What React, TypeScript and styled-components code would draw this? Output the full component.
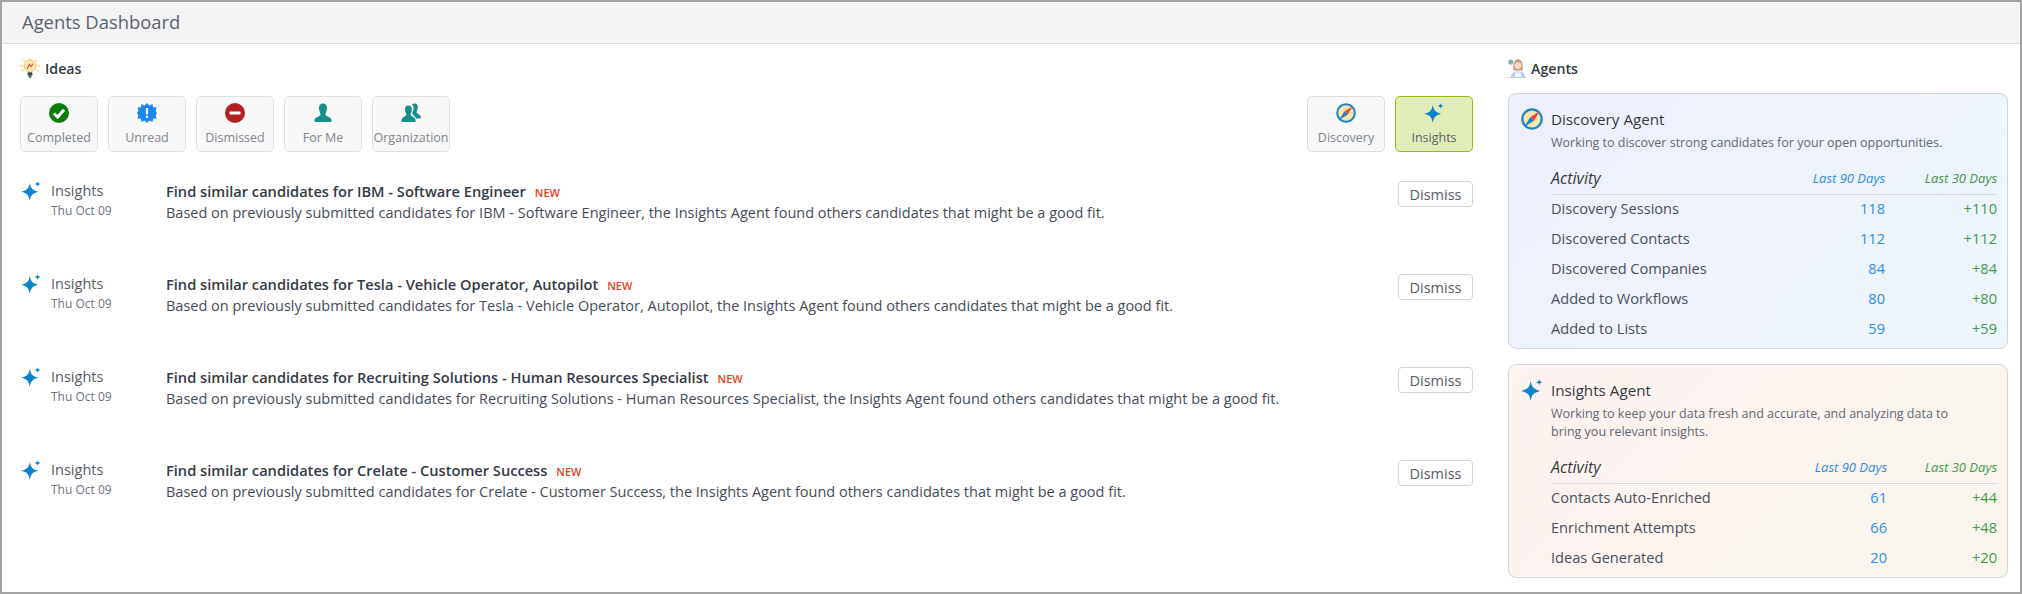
import styled, { createGlobalStyle } from "styled-components";

const GlobalStyle = createGlobalStyle`
  html, body { margin: 0; padding: 0; background: #fff; }
  body { font-family: "Open Sans", "Noto Sans", "Liberation Sans", sans-serif; color: #333a44; }
`;

const Sparkle = ({ size = 20 }: { size?: number }) => (
  <svg width={size} height={size} viewBox="0 0 20 20">
    <path d="M8.8 1.8 C9.8 7.4 11.2 9.2 17.6 10.8 C11.2 12.4 9.8 14.2 8.8 20 C7.8 14.2 6.4 12.4 0 10.8 C6.4 9.2 7.8 7.4 8.8 1.8Z" fill="#0a84cf" />
    <path d="M16.6 0 C16.9 1.9 17.4 2.5 19.6 3 C17.4 3.5 16.9 4.1 16.6 6 C16.3 4.1 15.8 3.5 13.6 3 C15.8 2.5 16.3 1.9 16.6 0Z" fill="#0a84cf" />
  </svg>
);

const Compass = ({ size = 20 }: { size?: number }) => (
  <svg width={size} height={size} viewBox="0 0 20 20">
    <circle cx="10" cy="10" r="8.8" fill="#fbe3a0" stroke="#1b86cc" strokeWidth="2" />
    <circle cx="10" cy="10" r="5.5" fill="none" stroke="#f7efd2" strokeWidth="1" />
    <path d="M17 3 L11.8 11.6 L8.4 8.4Z" fill="#e8483c" />
    <path d="M3 17 L8.4 8.4 L11.8 11.6Z" fill="#1b7fd0" />
  </svg>
);

const Check = () => (
  <svg width="20" height="20" viewBox="0 0 20 20">
    <circle cx="10" cy="10" r="10" fill="#0b7d0b" />
    <path d="M5 10.5 L8.6 14 L15 6.8" fill="none" stroke="#fff" strokeWidth="3" />
  </svg>
);

const Burst = () => (
  <svg width="20" height="20" viewBox="0 0 20 20">
    <path
      d="M10 0 L12.3 2.6 L15.4 1 L16.2 4.2 L19.6 4.4 L18.6 7.6 L20 10 L18.6 12.4 L19.6 15.6 L16.2 15.8 L15.4 19 L12.3 17.4 L10 20 L7.7 17.4 L4.6 19 L3.8 15.8 L0.4 15.6 L1.4 12.4 L0 10 L1.4 7.6 L0.4 4.4 L3.8 4.2 L4.6 1 L7.7 2.6Z"
      fill="#1a86f0"
    />
    <rect x="8.9" y="5" width="2.2" height="6.4" fill="#fff" />
    <rect x="8.9" y="12.6" width="2.2" height="2.2" fill="#fff" />
  </svg>
);

const Minus = () => (
  <svg width="20" height="20" viewBox="0 0 20 20">
    <circle cx="10" cy="10" r="10" fill="#b3201f" />
    <rect x="4.5" y="8.6" width="11" height="2.8" rx="0.6" fill="#fff" />
  </svg>
);

const Person = () => (
  <svg width="20" height="20" viewBox="0 0 20 20">
    <path d="M10 0.5 C13 0.5 14.2 3 14 5.6 C13.8 8.4 12.6 10 12.4 11.4 C12.3 13 17.4 13.8 18.4 16.4 C18.8 17.6 18.6 19 18 19 L2 19 C1.4 19 1.2 17.6 1.6 16.4 C2.6 13.8 7.7 13 7.6 11.4 C7.4 10 6.2 8.4 6 5.6 C5.8 3 7 0.5 10 0.5Z" fill="#16908f" />
  </svg>
);

const People = () => (
  <svg width="20" height="20" viewBox="0 0 20 20">
    <path d="M13.5 0.5 C16 0.5 17 2.4 16.8 4.6 C16.6 6.8 15.6 8 15.6 9.2 C15.6 10.6 19 11.4 19.7 13.2 C20 14.2 19.8 15.4 19.2 15.4 L15 15.4 C14 13 11.6 11.6 11.2 10.6 C11 9.4 12.6 8 12.6 5 C12.6 3.4 11.8 2.4 11 1.8 C11.6 1 12.5 0.5 13.5 0.5Z" fill="#16908f" />
    <path d="M7.4 2.5 C10 2.5 11 4.6 10.8 7 C10.6 9.2 9.6 10.4 9.6 11.8 C9.6 13.2 13.6 14.2 14.4 16.4 C14.8 17.6 14.6 19 14 19 L1 19 C0.4 19 0.2 17.6 0.6 16.4 C1.4 14.2 5.2 13.2 5.2 11.8 C5.2 10.4 4.2 9.2 4 7 C3.8 4.6 4.8 2.5 7.4 2.5Z" fill="#16908f" />
  </svg>
);

const Bulb = () => (
  <svg width="20" height="20" viewBox="0 0 20 20">
    <g stroke="#f0c25e" strokeWidth="1.1">
      <path d="M10 0 V2.2 M3.4 1.8 L5 3.6 M16.6 1.8 L15 3.6 M0 7.8 H3 M17 7.8 H20 M1.4 13 L3.6 11.8 M18.6 13 L16.4 11.8" />
    </g>
    <circle cx="10" cy="8" r="6" fill="#fbe9ad" stroke="#e8c26f" strokeWidth="0.9" />
    <path d="M7.2 10.8 L9.4 6.4 L11 8.8 L13 5.6" fill="none" stroke="#d9534f" strokeWidth="1.1" />
    <rect x="7.6" y="14.2" width="4.8" height="3.6" rx="0.8" fill="#37474f" />
    <rect x="8.8" y="17.8" width="2.4" height="1.8" fill="#37474f" />
  </svg>
);

const AgentAvatar = () => (
  <svg width="18" height="19" viewBox="0 0 18 19">
    <circle cx="2.8" cy="3" r="2.6" fill="#7fb0a8" />
    <path d="M3 18.4 C3 14.4 5 12.2 10 12.2 C15 12.2 17 14.4 17 18.4Z" fill="#b9d0ef" />
    <rect x="7" y="13.4" width="6" height="4.6" rx="0.6" fill="#f5f7fa" />
    <path d="M5.4 11.4 C4.6 4.6 6.6 0.2 10 0.2 C13.4 0.2 15.4 4.6 14.6 11.4 L12 11.4 L8 11.4Z" fill="#c79a83" />
    <circle cx="10" cy="6.6" r="3.4" fill="#f6d8c6" />
    <rect x="0" y="18.3" width="18" height="0.7" fill="#b9c2cc" />
  </svg>
);

type AgentRow = { label: string; last90: number; last30: number };

const ideas = [
  { title: "Find similar candidates for IBM - Software Engineer", subject: "IBM - Software Engineer" },
  { title: "Find similar candidates for Tesla - Vehicle Operator, Autopilot", subject: "Tesla - Vehicle Operator, Autopilot" },
  { title: "Find similar candidates for Recruiting Solutions - Human Resources Specialist", subject: "Recruiting Solutions - Human Resources Specialist" },
  { title: "Find similar candidates for Crelate - Customer Success", subject: "Crelate - Customer Success" },
];

const discoveryRows: AgentRow[] = [
  { label: "Discovery Sessions", last90: 118, last30: 110 },
  { label: "Discovered Contacts", last90: 112, last30: 112 },
  { label: "Discovered Companies", last90: 84, last30: 84 },
  { label: "Added to Workflows", last90: 80, last30: 80 },
  { label: "Added to Lists", last90: 59, last30: 59 },
];

const insightRows: AgentRow[] = [
  { label: "Contacts Auto-Enriched", last90: 61, last30: 44 },
  { label: "Enrichment Attempts", last90: 66, last30: 48 },
  { label: "Ideas Generated", last90: 20, last30: 20 },
];

const ActivityTable = ({ rows, mid }: { rows: AgentRow[]; mid: number }) => (
  <Table $mid={mid}>
    <ActivityHead>Activity</ActivityHead>
    <PeriodHead $tone="#2b8fe8">Last 90 Days</PeriodHead>
    <PeriodHead $tone="#3f9a45">Last 30 Days</PeriodHead>
    <HeadRule />
    {rows.map((row) => (
      <Row key={row.label}>
        <RowLabel>{row.label}</RowLabel>
        <RowValue $tone="#2b8fe8">{row.last90}</RowValue>
        <RowValue $tone="#3f9a45">+{row.last30}</RowValue>
      </Row>
    ))}
  </Table>
);

export default function App() {
  return (
    <>
      <GlobalStyle />
      <Frame>
        <Header>Agents Dashboard</Header>
        <Body>
          <IdeasColumn>
            <SectionTitle>
              <Bulb />
              Ideas
            </SectionTitle>
            <Filters>
              <FilterGroup>
                <Chip><ChipIcon><Check /></ChipIcon>Completed</Chip>
                <Chip><ChipIcon><Burst /></ChipIcon>Unread</Chip>
                <Chip><ChipIcon><Minus /></ChipIcon>Dismissed</Chip>
                <Chip><ChipIcon><Person /></ChipIcon>For Me</Chip>
                <Chip><ChipIcon><People /></ChipIcon>Organization</Chip>
              </FilterGroup>
              <FilterGroup>
                <Chip><ChipIcon><Compass /></ChipIcon>Discovery</Chip>
                <Chip $active><ChipIcon><Sparkle /></ChipIcon>Insights</Chip>
              </FilterGroup>
            </Filters>
            <IdeaList>
              {ideas.map((idea) => (
                <Idea key={idea.title}>
                  <Sparkle />
                  <Source>
                    <SourceName>Insights</SourceName>
                    <SourceDate>Thu Oct 09</SourceDate>
                  </Source>
                  <IdeaText>
                    <IdeaTitle>
                      {idea.title}
                      <NewTag>NEW</NewTag>
                    </IdeaTitle>
                    <IdeaBody>
                      Based on previously submitted candidates for {idea.subject}, the Insights Agent found others candidates that might be a good fit.
                    </IdeaBody>
                  </IdeaText>
                  <DismissButton>Dismiss</DismissButton>
                </Idea>
              ))}
            </IdeaList>
          </IdeasColumn>
          <AgentsColumn>
            <SectionTitle>
              <AgentAvatar />
              Agents
            </SectionTitle>
            <AgentCards>
              <AgentCard $from="#edf0fb" $to="#eff6fd">
                <AgentName>
                  <Compass size={22} />
                  Discovery Agent
                </AgentName>
                <AgentDescription>Working to discover strong candidates for your open opportunities.</AgentDescription>
                <ActivityTable rows={discoveryRows} mid={112} />
              </AgentCard>
              <AgentCard $from="#fdf3f0" $to="#faf6ef">
                <AgentName>
                  <Sparkle size={22} />
                  Insights Agent
                </AgentName>
                <AgentDescription>
                  Working to keep your data fresh and accurate, and analyzing data to bring you relevant insights.
                </AgentDescription>
                <ActivityTable rows={insightRows} mid={110} />
              </AgentCard>
            </AgentCards>
          </AgentsColumn>
        </Body>
      </Frame>
    </>
  );
}

const Frame = styled.div`
  box-sizing: border-box;
  width: 2022px;
  height: 594px;
  border: 2px solid #a3a3a3;
  display: flex;
  flex-direction: column;
  overflow: hidden;
`;

const Header = styled.header`
  height: 42px;
  flex: none;
  box-sizing: border-box;
  padding: 0 0 2px 20px;
  display: flex;
  align-items: center;
  background: #f4f4f4;
  border-bottom: 1px solid #dcdcdc;
  font-size: 18.4px;
  color: #5a6270;
`;

const Body = styled.div`
  display: flex;
  padding: 13px 12px 0 18px;
  gap: 35px;
`;

const IdeasColumn = styled.section`
  width: 1453px;
  flex: none;
`;

const AgentsColumn = styled.section`
  width: 500px;
  flex: none;
`;

const SectionTitle = styled.h2`
  margin: 0;
  height: 22px;
  display: flex;
  align-items: center;
  gap: 5px;
  font-size: 14.2px;
  font-weight: 600;
  color: #333a44;
`;

const Filters = styled.div`
  margin-top: 17px;
  display: flex;
  justify-content: space-between;
`;

const FilterGroup = styled.div`
  display: flex;
  gap: 10px;
`;

const Chip = styled.div<{ $active?: boolean }>`
  box-sizing: border-box;
  width: 78px;
  height: 56px;
  padding-top: 6px;
  display: flex;
  flex-direction: column;
  align-items: center;
  border-radius: 5px;
  border: 1px solid ${(p) => (p.$active ? "#9ab80e" : "#dedede")};
  background: ${(p) => (p.$active ? "#e1edb9" : "#f8f8f8")};
  color: ${(p) => (p.$active ? "#5a6270" : "#80868f")};
  font-size: 12.5px;
  white-space: nowrap;
`;

const ChipIcon = styled.span`
  height: 20px;
  margin-bottom: 6px;
`;

const IdeaList = styled.div`
  margin-top: 29px;
  display: flex;
  flex-direction: column;
`;

const Idea = styled.article`
  height: 93px;
  padding-left: 1px;
  display: flex;
  align-items: flex-start;
`;

const Source = styled.div`
  width: 115px;
  margin-left: 10px;
  flex: none;
`;

const SourceName = styled.div`
  font-size: 14.5px;
  line-height: 20px;
  color: #555c68;
`;

const SourceDate = styled.div`
  font-size: 12px;
  line-height: 20px;
  color: #6d737d;
`;

const IdeaText = styled.div`
  flex: 1;
`;

const IdeaTitle = styled.div`
  font-size: 14.62px;
  font-weight: 600;
  line-height: 20px;
  color: #333a44;
`;

const NewTag = styled.span`
  margin-left: 9px;
  font-size: 11px;
  font-weight: 600;
  color: #e8401c;
`;

const IdeaBody = styled.div`
  font-size: 14.5px;
  line-height: 20px;
  color: #454c58;
`;

const DismissButton = styled.button`
  box-sizing: border-box;
  width: 75px;
  height: 26px;
  padding: 0;
  flex: none;
  border: 1px solid #d3d3d3;
  border-radius: 4px;
  background: #fff;
  font-family: inherit;
  font-size: 14.5px;
  color: #555c68;
`;

const AgentCards = styled.div`
  margin-top: 14px;
  display: flex;
  flex-direction: column;
  gap: 15px;
`;

const AgentCard = styled.div<{ $from: string; $to: string }>`
  box-sizing: border-box;
  padding: 14px 10px 5px 12px;
  border: 1px solid #d3d6db;
  border-radius: 8px;
  background: linear-gradient(135deg, ${(p) => p.$from}, ${(p) => p.$to});
`;

const AgentName = styled.div`
  display: flex;
  align-items: center;
  gap: 8px;
  font-size: 15.2px;
  color: #333a44;
`;

const AgentDescription = styled.p`
  max-width: 400px;
  margin: 4px 0 0 30px;
  font-size: 12.5px;
  line-height: 18px;
  color: #626873;
`;

const Table = styled.div<{ $mid: number }>`
  margin: 15px 0 0 30px;
  display: grid;
  grid-template-columns: 1fr 120px ${(p) => p.$mid}px;
`;

const ActivityHead = styled.div`
  font-size: 16px;
  font-style: italic;
  line-height: 22px;
  color: #333a44;
`;

const PeriodHead = styled.div<{ $tone: string }>`
  text-align: right;
  align-self: center;
  font-size: 13px;
  font-style: italic;
  color: ${(p) => p.$tone};
`;

const HeadRule = styled.div`
  grid-column: 1 / -1;
  height: 1px;
  margin: 5px 0 -2px;
  background: #d8d9dd;
`;

const Row = styled.div`
  display: contents;
`;

const RowLabel = styled.div`
  font-size: 14.6px;
  line-height: 30px;
  color: #4a505c;
`;

const RowValue = styled.div<{ $tone: string }>`
  font-size: 14.6px;
  line-height: 30px;
  text-align: right;
  color: ${(p) => p.$tone};
`;
